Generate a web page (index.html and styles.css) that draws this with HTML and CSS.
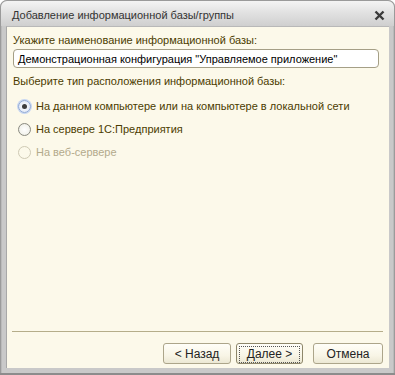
FILE: index.html
```html
<!DOCTYPE html>
<html lang="ru">

<head>
  <meta charset="UTF-8" />
  <title>Добавление информационной базы/группы</title>
  <link rel="stylesheet" href="styles.css">
</head>

<body>

  <div id="ventana">
    <div id="titulo">
      <span class="titulo-texto">Добавление информационной базы/группы</span>
      <svg class="cerrar" width="11" height="11" viewBox="0 0 11 11">
        <path d="M1.5 1.5 L9.5 9.5 M9.5 1.5 L1.5 9.5" stroke="#3a3a3a" stroke-width="2.4" />
      </svg>
    </div>

    <div id="contenido">
      <div class="cuerpo">
        <div class="etiqueta">Укажите наименование информационной базы:</div>
        <div class="campo">Демонстрационная конфигурация "Управляемое приложение"</div>

        <div class="etiqueta segunda">Выберите тип расположения информационной базы:</div>
        <div class="opciones">
          <div class="opcion">
            <span class="radio marcado"></span>
            <span>На данном компьютере или на компьютере в локальной сети</span>
          </div>
          <div class="opcion">
            <span class="radio"></span>
            <span>На сервере 1С:Предприятия</span>
          </div>
          <div class="opcion inactivo">
            <span class="radio"></span>
            <span>На веб-сервере</span>
          </div>
        </div>
      </div>

      <div class="pie">
        <button class="boton">&lt; Назад</button>
        <button class="boton foco"><span>Далее &gt;</span></button>
        <button class="boton cancelar">Отмена</button>
      </div>
    </div>
  </div>

</body>

</html>
```

FILE: styles.css
```css
body {
  margin: 0;
  padding: 0;
  font-family: "Liberation Sans", Arial, sans-serif;
  font-size: 11px;
  background: #ffffff;
}

#ventana {
  width: 395px;
  height: 375px;
  box-sizing: border-box;
  padding: 0 6px 7px 6px;
  border-radius: 7px 7px 0 0;
  background: linear-gradient(to right, #8c8c8c 0, #c9c9c9 2px, #c9c9c9 calc(100% - 2px), #8c8c8c 100%);
  box-shadow: inset 0 -2px 0 #8c8c8c;
  display: flex;
  flex-direction: column;
}

#titulo {
  height: 26px;
  margin: 0 -6px;
  padding: 0 9px 0 11px;
  border-radius: 7px 7px 0 0;
  background: linear-gradient(to bottom, #f4f4f4 0, #e2e2e2 45%, #cfcfcf 100%);
  border: 1px solid #9a9a9a;
  border-bottom: none;
  display: flex;
  align-items: center;
  justify-content: space-between;
  box-sizing: border-box;
}

.titulo-texto {
  font-size: 11px;
  color: #333333;
  padding-top: 3px;
}

.cerrar {
  margin-top: 3px;
}

#contenido {
  flex: 1;
  background: #fcf9ea;
  border-left: 1px solid #a8a8a8;
  border-top: 1px solid #b8b8b8;
  display: flex;
  flex-direction: column;
  justify-content: space-between;
  color: #4b3c00;
}

.cuerpo {
  padding: 6px 10px 0 6px;
}

.etiqueta {
  line-height: 14px;
}

.segunda {
  margin-top: 6px;
}

.campo {
  margin-top: 2px;
  height: 19px;
  box-sizing: border-box;
  background: #ffffff;
  border: 1px solid #a59f86;
  border-radius: 4px;
  padding: 2px 4px;
  color: #000000;
  line-height: 14px;
  white-space: nowrap;
}

.opciones {
  display: flex;
  flex-direction: column;
  gap: 9px;
  margin-top: 11px;
  padding-left: 5px;
}

.opcion {
  display: flex;
  align-items: center;
  gap: 5px;
  height: 14px;
  color: #4b3c00;
}

.inactivo {
  color: #b3aa8c;
}

.radio {
  width: 11px;
  height: 11px;
  border: 1px solid #8a8a80;
  border-radius: 50%;
  background: radial-gradient(circle at 50% 50%, #ffffff 0, #f4f4ee 60%, #dcdcd2 100%);
  position: relative;
}

.marcado {
  border-color: #8ea8d8;
  box-shadow: 0 0 0 1px #c6d6f2;
  background: radial-gradient(circle at 50% 50%, #ffffff 0, #e8eef8 60%, #c9d6ee 100%);
}

.marcado::after {
  content: "";
  position: absolute;
  left: 3px;
  top: 3px;
  width: 5px;
  height: 5px;
  border-radius: 50%;
  background: #3c3c3c;
}

.inactivo .radio {
  border-color: #cfcab4;
  background: #fcf9ea;
}

.pie {
  margin: 0 6px 4px 5px;
  border-top: 1px solid #b5ad8a;
  padding-top: 11px;
  display: flex;
  justify-content: flex-end;
  gap: 5px;
}

.boton {
  width: 68px;
  height: 21px;
  padding: 0;
  font-family: "Liberation Sans", Arial, sans-serif;
  font-size: 12px;
  color: #222222;
  border: 1px solid #aca58a;
  border-radius: 3px;
  background: linear-gradient(to bottom, #fffef8 0, #f8f5e6 60%, #ece8d4 100%);
}

.foco {
  width: 67px;
  border-color: #8e876a;
  padding: 2px;
}

.foco span {
  display: block;
  height: 15px;
  line-height: 15px;
  border: 1px dotted #555555;
}

.cancelar {
  margin-left: 5px;
  width: 70px;
}
```
